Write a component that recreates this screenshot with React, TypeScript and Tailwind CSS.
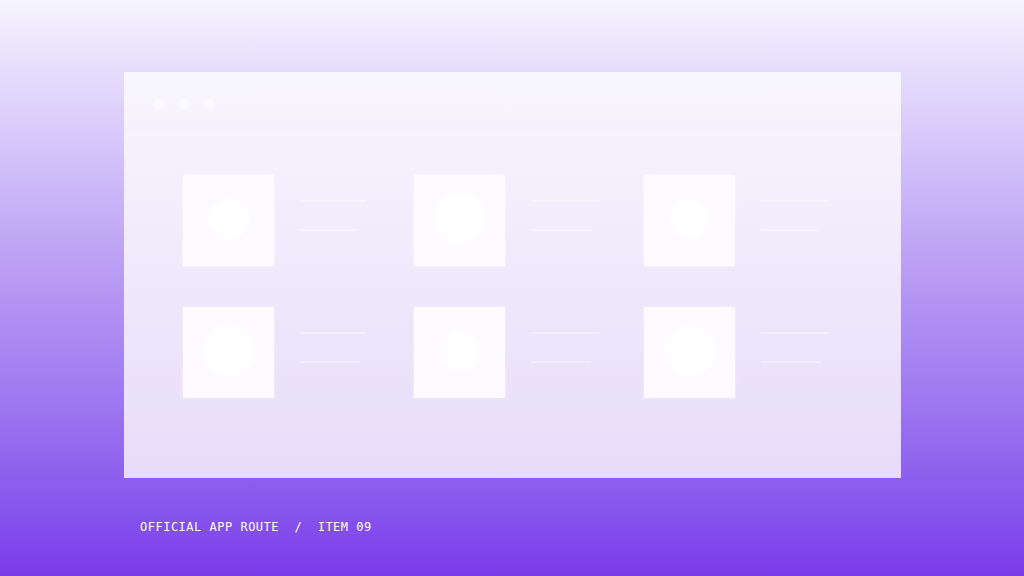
const tiles = [
  { dot: "w-[40px] h-[40px]", top: "w-[66px]", bottom: "w-[58px]" },
  { dot: "w-[50px] h-[50px]", top: "w-[68px]", bottom: "w-[61px]" },
  { dot: "w-[38px] h-[38px]", top: "w-[68px]", bottom: "w-[58px]" },
  { dot: "w-[50px] h-[50px]", top: "w-[66px]", bottom: "w-[60px]" },
  { dot: "w-[38px] h-[38px]", top: "w-[68px]", bottom: "w-[60px]" },
  { dot: "w-[50px] h-[50px]", top: "w-[68px]", bottom: "w-[60px]" },
];

function Tile({ dot, top, bottom }: { dot: string; top: string; bottom: string }) {
  return (
    <div className="flex items-start gap-[26px]">
      <div className="w-[91px] h-[91px] bg-[#fdfbff] shadow-[0_0_3px_rgba(255,255,255,0.5)] flex items-center justify-center">
        <div className={`${dot} rounded-full bg-white blur-[2px] -mt-[3px]`} />
      </div>
      <div className="flex flex-col pt-[25px] gap-[27px]">
        <div className={`${top} h-[2px] bg-white/35 blur-[0.5px]`} />
        <div className={`${bottom} h-[2px] bg-white/35 blur-[0.5px]`} />
      </div>
    </div>
  );
}

export default function App() {
  return (
    <div className="w-[1024px] h-[576px] bg-linear-to-b from-[#f6f4fe] via-[#b697f2] to-[#7b3aea] flex flex-col">
      <div className="pt-[72px] pl-[124px]">
        <div className="w-[777px] h-[406px] bg-linear-to-b from-[#f8f6fe] to-[#e7dcf9] flex flex-col">
          {/* window bar */}
          <div className="h-[64px] flex items-center gap-[13px] pl-[29px] border-b border-white/30">
            <span className="w-[12px] h-[12px] rounded-full bg-white/60 blur-[1px]" />
            <span className="w-[12px] h-[12px] rounded-full bg-white/60 blur-[1px]" />
            <span className="w-[12px] h-[12px] rounded-full bg-white/60 blur-[1px]" />
          </div>
          <div className="grid grid-cols-[231px_230px_230px] gap-y-[41px] pl-[59px] pt-[39px]">
            {tiles.map((t, i) => (
              <Tile key={i} {...t} />
            ))}
          </div>
        </div>
      </div>
      <div className="pl-[140px] pt-[42px] text-white text-[12px] leading-[14px] tracking-[0.5px] font-['DejaVu_Sans_Mono','Liberation_Mono',monospace] whitespace-pre">
        OFFICIAL APP ROUTE  /  ITEM 09
      </div>
    </div>
  );
}
